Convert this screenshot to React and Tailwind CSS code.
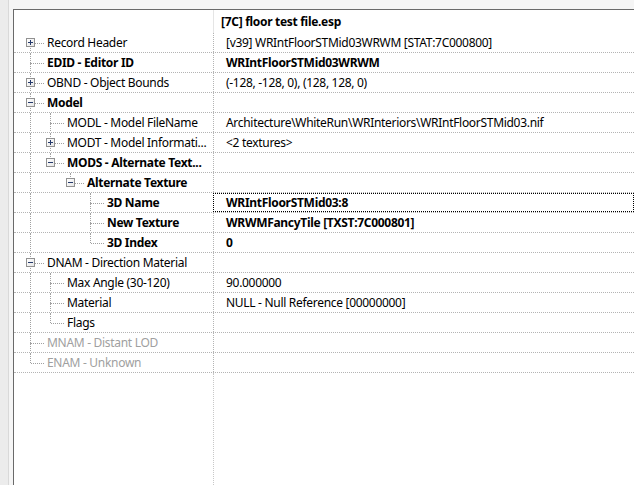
import React from "react";

// Record tree: each row knows its depth, the rails of its ancestors and how its own connector runs
const rows = [
  { label: "Record Header", value: "[v39] WRIntFloorSTMid03WRWM [STAT:7C000800]", rails: [], box: "plus", up: false, down: true },
  { label: "EDID - Editor ID", value: "WRIntFloorSTMid03WRWM", rails: [], up: true, down: true, bold: true, valueBold: true },
  { label: "OBND - Object Bounds", value: "(-128, -128, 0), (128, 128, 0)", rails: [], box: "plus", up: true, down: true },
  { label: "Model", value: "", rails: [], box: "minus", up: true, down: true, bold: true },
  { label: "MODL - Model FileName", value: "Architecture\\WhiteRun\\WRInteriors\\WRIntFloorSTMid03.nif", rails: [true], up: true, down: true },
  { label: "MODT - Model Informati...", value: "<2 textures>", rails: [true], box: "plus", up: true, down: true },
  { label: "MODS - Alternate Text...", value: "", rails: [true], box: "minus", up: true, down: false, bold: true },
  { label: "Alternate Texture", value: "", rails: [true, false], box: "minus", up: true, down: false, bold: true },
  { label: "3D Name", value: "WRIntFloorSTMid03:8", rails: [true, false, false], up: true, down: true, bold: true, valueBold: true, focus: true },
  { label: "New Texture", value: "WRWMFancyTile [TXST:7C000801]", rails: [true, false, false], up: true, down: true, bold: true, valueBold: true },
  { label: "3D Index", value: "0", rails: [true, false, false], up: true, down: false, bold: true, valueBold: true },
  { label: "DNAM - Direction Material", value: "", rails: [], box: "minus", up: true, down: true },
  { label: "Max Angle (30-120)", value: "90.000000", rails: [true], up: true, down: true },
  { label: "Material", value: "NULL - Null Reference [00000000]", rails: [true], up: true, down: true },
  { label: "Flags", value: "", rails: [true], up: true, down: false },
  { label: "MNAM - Distant LOD", value: "", rails: [], up: true, down: true, dim: true },
  { label: "ENAM - Unknown", value: "", rails: [], up: true, down: false, dim: true },
];

function ExpandBox({ kind }) {
  return (
    <span className="absolute left-[6px] top-[5px] h-[9px] w-[9px] border border-[#919191] bg-gradient-to-br from-white to-[#e6e6e6]">
      <span className="absolute left-[1px] top-[3px] h-[1px] w-[5px] bg-[#23386b]" />
      {kind === "plus" && (
        <span className="absolute left-[3px] top-[1px] h-[5px] w-[1px] bg-[#23386b]" />
      )}
    </span>
  );
}

function Guide({ rail, up, down, branch, box }) {
  return (
    <span className="relative h-[19px] w-5 shrink-0">
      {rail && (
        <span className="absolute left-[10px] top-0 h-[20px] border-l border-dotted border-[#a0a0a0]" />
      )}
      {up && (
        <span className="absolute left-[10px] top-0 h-[10px] border-l border-dotted border-[#a0a0a0]" />
      )}
      {down && (
        <span className="absolute left-[10px] top-[10px] h-[10px] border-l border-dotted border-[#a0a0a0]" />
      )}
      {branch && (
        <span className="absolute left-[11px] top-[10px] w-[13px] border-t border-dotted border-[#a0a0a0]" />
      )}
      {box && <ExpandBox kind={box} />}
    </span>
  );
}

function Row({ row }) {
  const labelColor = row.dim ? "text-[#a0a0a0]" : "text-black";
  return (
    <div className="flex h-5 border-b border-dotted border-[#b4b4b4]">
      <div className="flex w-[199px] shrink-0 items-center overflow-hidden pl-[6px]">
        {row.rails.map((r, i) => (
          <Guide key={i} rail={r} />
        ))}
        <Guide up={row.up} down={row.down} branch box={row.box} />
        <span
          className={`ml-[7px] whitespace-nowrap ${labelColor} ${row.bold ? "font-bold" : ""}`}
        >
          {row.label}
        </span>
      </div>
      <div className="relative flex flex-1 items-center border-l border-dotted border-[#b4b4b4] pl-3">
        {row.focus && (
          <span className="absolute inset-y-0 left-[-1px] right-0 border border-dotted border-black" />
        )}
        <span className={`whitespace-nowrap text-black ${row.valueBold ? "font-bold" : ""}`}>
          {row.value}
        </span>
      </div>
    </div>
  );
}

export default function App() {
  return (
    <div className="flex h-[485px] w-[634px] overflow-hidden bg-[#f0f0f0] font-['Segoe_UI','Noto_Sans',sans-serif] text-[12px] leading-none tracking-[-0.3px]">
      {/* left splitter strip */}
      <div className="w-[9px] shrink-0 border-r border-[#d9d9d9] bg-[#ececec]" />

      <div className="flex min-w-0 flex-1 flex-col">
        <div className="h-[9px] shrink-0 bg-[#f5f5f5]" />
        <div className="flex min-h-0 flex-1">
          <div className="w-[4px] shrink-0 bg-[#f5f5f5]" />

          {/* record view */}
          <div className="flex min-w-0 flex-1 flex-col border-l border-t border-[#6a6a6a] bg-white">
            <div className="flex h-[23px] shrink-0">
              <div className="w-[199px] shrink-0" />
              <div className="flex flex-1 items-center border-l border-[#e5e5e5] pl-[7px] font-bold text-black">
                [7C] floor test file.esp
              </div>
            </div>

            {rows.map((row) => (
              <Row key={row.label} row={row} />
            ))}

            <div className="flex flex-1">
              <div className="w-[199px] shrink-0" />
              <div className="flex-1 border-l border-dotted border-[#c8c8c8]" />
            </div>
          </div>
        </div>
      </div>
    </div>
  );
}
